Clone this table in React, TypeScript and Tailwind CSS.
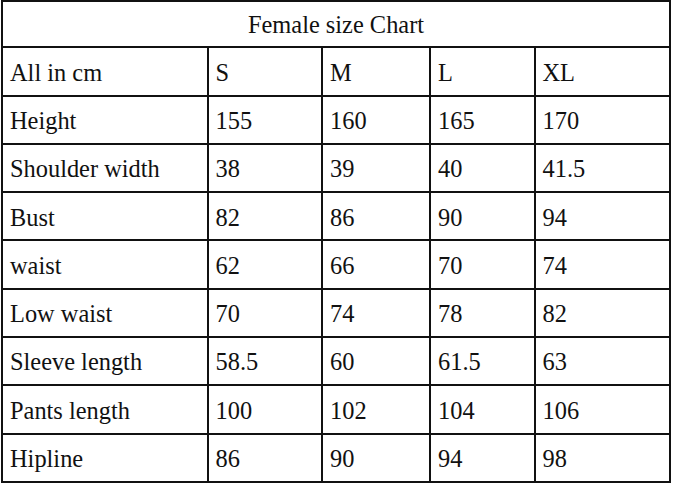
const sizes = ['S', 'M', 'L', 'XL'];

const rows: [string, string[]][] = [
  ['Height', ['155', '160', '165', '170']],
  ['Shoulder width', ['38', '39', '40', '41.5']],
  ['Bust', ['82', '86', '90', '94']],
  ['waist', ['62', '66', '70', '74']],
  ['Low waist', ['70', '74', '78', '82']],
  ['Sleeve length', ['58.5', '60', '61.5', '63']],
  ['Pants length', ['100', '102', '104', '106']],
  ['Hipline', ['86', '90', '94', '98']],
];

function Cell({ children }: { children: React.ReactNode }) {
  return (
    <div className="h-[48.3px] flex items-center pl-[7px] pt-[3px] border-r-2 border-b-2 border-[#111] whitespace-nowrap">
      {children}
    </div>
  );
}

export default function App() {
  return (
    <div className="w-[674px] h-[487px] bg-white overflow-hidden font-[family-name:Liberation_Serif,serif] text-[24.4px] text-[#111]">
      <div className="ml-[1px] w-[670px] border-l-2 border-t-2 border-[#111] grid grid-cols-[205.5px_114.5px_108px_104.5px_135.5px]">
        <div className="col-span-5 h-[46.3px] flex items-center justify-center pt-[2px] border-r-2 border-b-2 border-[#111]">
          Female size Chart
        </div>
        <Cell>All in cm</Cell>
        {sizes.map((s) => (
          <Cell key={s}>{s}</Cell>
        ))}
        {rows.map(([label, values]) => (
          <div key={label} className="contents">
            <Cell>{label}</Cell>
            {values.map((v, i) => (
              <Cell key={i}>{v}</Cell>
            ))}
          </div>
        ))}
      </div>
    </div>
  );
}
